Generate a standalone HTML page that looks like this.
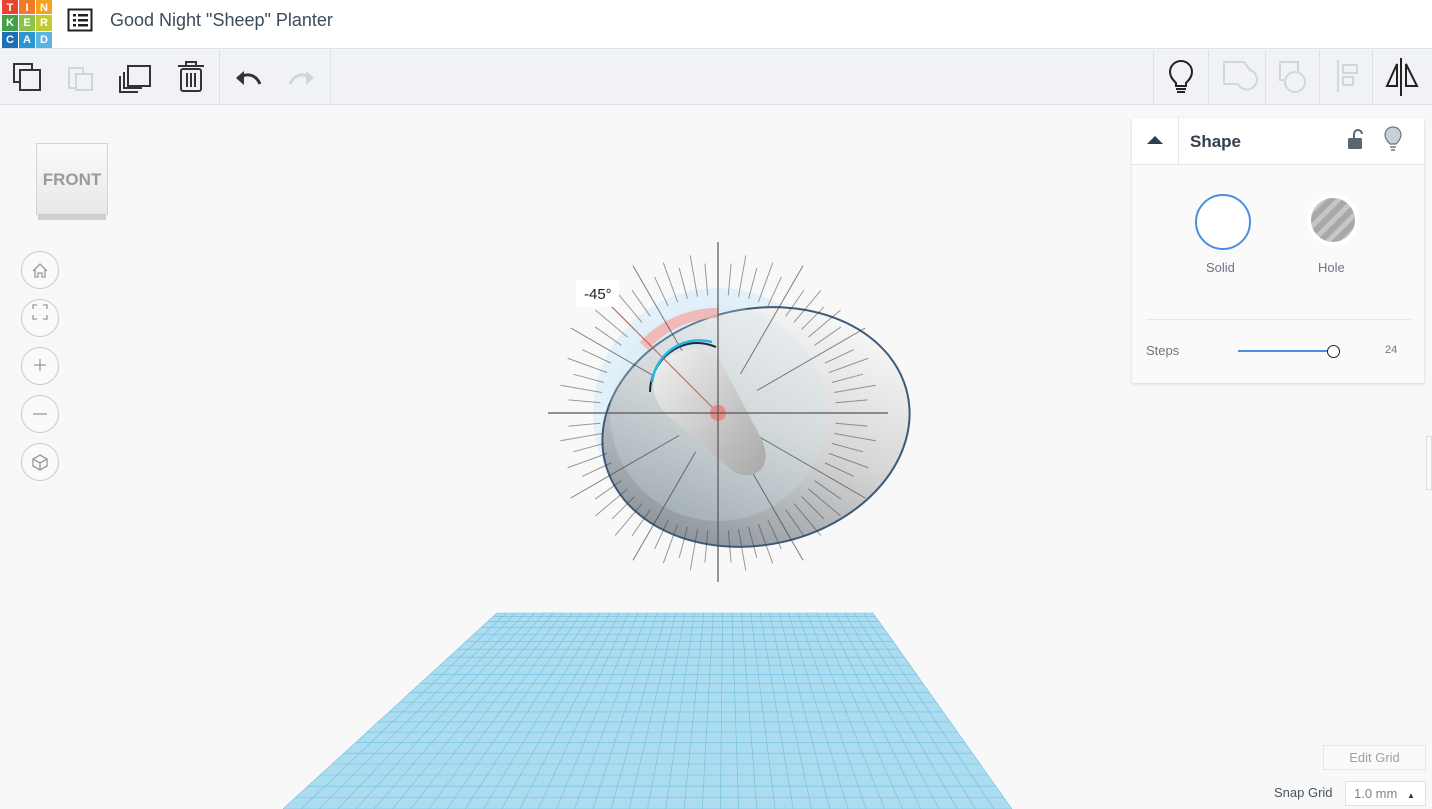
<!DOCTYPE html>
<html><head><meta charset="utf-8"><style>
*{margin:0;padding:0;box-sizing:border-box}
body{width:1432px;height:809px;overflow:hidden;background:#f8f8f8;font-family:"Liberation Sans",sans-serif;position:relative}
.hdr{position:absolute;left:0;top:0;width:1432px;height:49px;background:#fff;border-bottom:1px solid #dcdfe3}
.tb{position:absolute;left:0;top:50px;width:1432px;height:55px;background:#f1f2f5;border-bottom:1px solid #dfe2e6}
.logo{position:absolute;left:2px;top:0;display:grid;grid-template-columns:16px 16px 16px;grid-template-rows:14px 16px 16px;gap:1px}
.logo div{color:#fff;font-size:11px;font-weight:bold;text-align:center;line-height:16px}
.title{position:absolute;left:110px;top:10px;font-size:18px;color:#3c4a5a}
.sep{position:absolute;top:50px;width:1px;height:54px;background:#dde0e4}
.panel{position:absolute;left:1132px;top:118px;width:292px;height:265px;background:#fafafa;box-shadow:0 1px 3px rgba(0,0,0,.15);border-radius:2px}
.ph{height:47px;background:#fff;border-bottom:1px solid #e6e6e6;position:relative}
.lbl{position:absolute;font-size:13px;color:#6b7580}
.nav{position:absolute;left:21px;width:38px;height:38px;border:1px solid #c9c9c9;border-radius:50%;background:#fafafa}
</style></head><body>
<div class="hdr">
 <div class="logo">
  <div style="background:#e8432d">T</div><div style="background:#ef7a2a">I</div><div style="background:#f5a21f">N</div>
  <div style="background:#43a047">K</div><div style="background:#8bc34a">E</div><div style="background:#c0ca33">R</div>
  <div style="background:#1f6fb5">C</div><div style="background:#2e95d3">A</div><div style="background:#5bb5e0">D</div>
 </div>
 <svg style="position:absolute;left:67px;top:8px" width="26" height="24"><rect x="1.5" y="1.5" width="23" height="21" fill="none" stroke="#222" stroke-width="2"/><g fill="#222"><rect x="6" y="6" width="3" height="2.5"/><rect x="11" y="6" width="10" height="2.5"/><rect x="6" y="11" width="3" height="2.5"/><rect x="11" y="11" width="10" height="2.5"/><rect x="6" y="16" width="3" height="2.5"/><rect x="11" y="16" width="10" height="2.5"/></g></svg>
 <div class="title">Good Night "Sheep" Planter</div>
</div>
<div class="tb"></div>
<div class="sep" style="left:219px"></div><div class="sep" style="left:330px"></div>
<div class="sep" style="left:1153px"></div><div class="sep" style="left:1208px"></div><div class="sep" style="left:1265px"></div><div class="sep" style="left:1319px"></div><div class="sep" style="left:1372px"></div>
<svg style="position:absolute;left:0;top:50px" width="1432" height="55" fill="none" stroke-width="2">
 <g stroke="#333"><rect x="14" y="14" width="18" height="18"/><rect x="20" y="20" width="20" height="20" fill="#f1f2f5"/></g>
 <g stroke="#cfd6de"><rect x="69" y="18" width="14" height="20"/><rect x="76" y="24" width="16" height="16" fill="#f1f2f5"/></g>
 <g stroke="#333"><rect x="128" y="16" width="22" height="20"/><path d="M124 22v16h18M120 26v16h18"/></g>
 <g stroke="#333"><path d="M178 16h26M186 16v-4h10v4"/><rect x="181" y="19" width="20" height="22" rx="2"/><path d="M187 23v14M191 23v14M195 23v14"/></g>
 <path d="M238 28c10-6 18-3 22 6" stroke="#333" stroke-width="3"/><path d="M236 28l8-7v14z" fill="#333" stroke="none"/>
 <path d="M312 28c-10-6-18-3-22 6" stroke="#cfd6de" stroke-width="3"/><path d="M314 28l-8-7v14z" fill="#cfd6de" stroke="none"/>
 <g stroke="#222"><path d="M1176 33c-4-4-6-7-6-11a11 11 0 0 1 22 0c0 4-2 7-6 11v3h-10z"/><path d="M1176 39h10M1177 42h8"/></g>
 <g stroke="#cfd6de"><path d="M1224 12h20l6 8a10 10 0 1 1-12 14h-14z"/></g>
 <g stroke="#cfd6de"><rect x="1280" y="12" width="18" height="18"/><circle cx="1295" cy="32" r="10" fill="#f1f2f5"/></g>
 <g stroke="#cfd6de"><path d="M1338 10v32"/><rect x="1343" y="15" width="14" height="8"/><rect x="1343" y="27" width="10" height="8"/></g>
 <g stroke="#222"><path d="M1401 8v38"/><path d="M1397 14v22h-10z"/><path d="M1406 14v22h11z"/></g>
</svg>
<div style="position:absolute;left:36px;top:143px;width:72px;height:72px;background:linear-gradient(#fafafa,#e8e8e8);border:1px solid #d5d5d5;font-weight:bold;color:#9a9a9a;font-size:17px;text-align:center;line-height:72px">FRONT</div>
<div style="position:absolute;left:38px;top:214px;width:68px;height:6px;background:#cfcfcf"></div>
<div class="nav" style="top:251px"></div><div class="nav" style="top:299px"></div><div class="nav" style="top:347px"></div><div class="nav" style="top:395px"></div><div class="nav" style="top:443px"></div>
<svg style="position:absolute;left:21px;top:251px" width="38" height="240" fill="none" stroke="#999" stroke-width="1.3">
 <path d="M12 20l7-7 7 7M14 18v8h3v-4h4v4h3v-8"/>
 <path d="M12 58v-4h4M22 54h4v4M26 64v4h-4M16 68h-4v-4"/>
 <path d="M19 108v12M13 114h12"/>
 <path d="M12 163h14"/>
 <path d="M19 204l7 4-7 4-7-4zM12 208v7l7 4 7-4v-7M19 212v7"/>
</svg>
<svg style="position:absolute;left:0;top:0" width="1432" height="809">
 <defs>
  <linearGradient id="eg" x1="0.85" y1="0.15" x2="0.15" y2="0.9"><stop offset="0" stop-color="#f6f6f6"/><stop offset="0.45" stop-color="#d6d6d6"/><stop offset="1" stop-color="#8a939a"/></linearGradient>
  <linearGradient id="pg" x1="0" y1="0" x2="1" y2="1"><stop offset="0" stop-color="#f2f2f2"/><stop offset="1" stop-color="#a8a8a8"/></linearGradient>
 </defs>
 <polygon points="497,613 873,613 1012,809 283,809" fill="#acdcf0"/>
 <g id="grid" stroke="#6fbfe0" stroke-width="0.6"></g>
 <circle cx="718" cy="413" r="125" fill="#dff0f8" opacity="0.9"/>
 <ellipse cx="756" cy="427" rx="155" ry="118" transform="rotate(-12 756 427)" fill="url(#eg)" stroke="#3d5a78" stroke-width="2"/>
 <circle cx="718" cy="413" r="108" fill="#cfe6f1" opacity="0.25"/>
 <path d="M648 350A95 95 0 0 1 718 318v-10A105 105 0 0 0 640 342z" fill="#f2b0ac" opacity="0.85"/>
 <g id="ticks" stroke="#3a3a3a" stroke-width="1"></g>
 <path d="M655 375c5-25 45-35 65-15l42 80c12 28-8 42-28 32l-65-55c-15-15-18-28-14-42z" fill="url(#pg)"/>
 <path d="M650 392c0-30 30-60 66-45" fill="none" stroke="#1b2a3a" stroke-width="2"/>
 <path d="M652 382c3-25 28-48 60-40" fill="none" stroke="#21b8e0" stroke-width="2.5"/>
 <line x1="718" y1="413" x2="611" y2="306" stroke="#d9544f" stroke-width="1"/>
 <circle cx="718" cy="413" r="8" fill="#e88b86"/>
 <line x1="718" y1="242" x2="718" y2="582" stroke="#555" stroke-width="1.2"/>
 <line x1="548" y1="413" x2="888" y2="413" stroke="#555" stroke-width="1.2"/>
 <rect x="576" y="280" width="43" height="27" fill="#fff"/>
 <text x="584" y="299" font-size="15" fill="#222" font-family="Liberation Sans">-45°</text>
</svg>
<div class="panel">
 <div class="ph">
  <svg style="position:absolute;left:14px;top:16px" width="18" height="12"><path d="M1 10l8-8 8 8z" fill="#2f3d4c"/></svg>
  <div style="position:absolute;left:46px;top:0;width:1px;height:47px;background:#e6e6e6"></div>
  <div style="position:absolute;left:58px;top:14px;font-size:17px;font-weight:bold;color:#35404c">Shape</div>
  <svg style="position:absolute;left:214px;top:10px" width="18" height="22"><path d="M8 10V6a4 4 0 0 1 8 0" fill="none" stroke="#5b6570" stroke-width="2"/><rect x="2" y="10" width="14" height="11" rx="1.5" fill="#5b6570"/></svg>
  <svg style="position:absolute;left:252px;top:8px" width="18" height="26"><path d="M6 18c-3-3-5-6-5-9a8 8 0 0 1 16 0c0 3-2 6-5 9z" fill="#c8d0d8" stroke="#6b7580" stroke-width="1.2"/><path d="M6 21h6M7 24h4" stroke="#6b7580" stroke-width="1.5"/></svg>
 </div>
 <div style="position:absolute;left:63px;top:76px;width:56px;height:56px;border:2px solid #4a8fe0;border-radius:50%;background:#fff"></div>
 <div style="position:absolute;left:175px;top:76px;width:52px;height:52px;border-radius:50%;border:4px solid #fff;background:repeating-linear-gradient(-45deg,#a8a8a8 0 6px,#c6c6c6 6px 11px)"></div>
 <div class="lbl" style="left:74px;top:142px">Solid</div>
 <div class="lbl" style="left:186px;top:142px">Hole</div>
 <div style="position:absolute;left:14px;top:201px;width:265px;height:1px;background:#e8e8e8"></div>
 <div class="lbl" style="left:14px;top:225px">Steps</div>
 <div style="position:absolute;left:106px;top:232px;width:90px;height:2px;background:#4a8fe0"></div>
 <div style="position:absolute;left:195px;top:227px;width:13px;height:13px;border:1.5px solid #222;border-radius:50%;background:#fff"></div>
 <div class="lbl" style="left:253px;top:226px;font-size:11px">24</div>
</div>
<div style="position:absolute;left:1426px;top:436px;width:6px;height:54px;border:1px solid #ddd;background:#fafafa"></div>
<div style="position:absolute;left:1323px;top:745px;width:103px;height:25px;border:1px solid #e6e6e6;background:#fafafa;font-size:13px;color:#9aa3ab;text-align:center;line-height:23px">Edit Grid</div>
<div style="position:absolute;left:1274px;top:785px;font-size:13px;color:#4a5560">Snap Grid</div>
<div style="position:absolute;left:1345px;top:781px;width:81px;height:25px;border:1px solid #e0e0e0;background:#fff;font-size:13px;color:#7a848e;padding-left:8px;line-height:24px">1.0 mm <span style="font-size:8px;color:#333;margin-left:6px">▲</span></div>
<script>
var t=document.getElementById('ticks'),s='';
for(var i=0;i<72;i++){var a=i*5*Math.PI/180;if(i%18==0)continue;var c=Math.cos(a),n=Math.sin(a);var r1=118,r2=(i%2?150:160);
if(i%6==0){r1=45;r2=170}
s+='<line x1="'+(718+c*r1)+'" y1="'+(413+n*r1)+'" x2="'+(718+c*r2)+'" y2="'+(413+n*r2)+'" opacity="'+(i%6==0?0.65:0.5)+'"/>';}
t.innerHTML=s;
var g=document.getElementById('grid'),h='';
for(var k=0;k<=40;k++){var f=k/40;var xt=497+376*f,xb=283+729*f;h+='<line x1="'+xt+'" y1="613" x2="'+xb+'" y2="809"/>';}
for(var j=0;j<=22;j++){var v=Math.pow(j/22,1.3);var y=613+196*v;var xl=497-214*v,xr=873+139*v;h+='<line x1="'+xl+'" y1="'+y+'" x2="'+xr+'" y2="'+y+'"/>';}
g.innerHTML=h;
</script>
</body></html>
